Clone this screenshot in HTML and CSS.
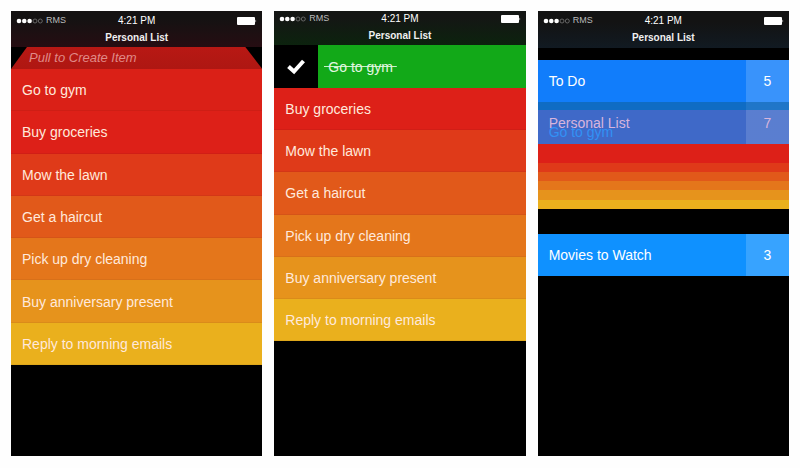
FILE: index.html
```html
<!DOCTYPE html>
<html lang="en">
<head>
<meta charset="utf-8">
<title>Personal List</title>
<link rel="stylesheet" href="styles.css">
</head>
<body>
<main class="gallery">
  <section class="phone">
    <header class="bar bar-red">
      <div class="status">
        <span class="carrier"><svg class="signal" viewBox="0 0 27 6" aria-hidden="true"><g fill="#fff"><circle cx="3" cy="3" r="2.3"/><circle cx="8.3" cy="3" r="2.3"/><circle cx="13.6" cy="3" r="2.3"/></g><g fill="none" stroke="#777" stroke-width=".8"><circle cx="19" cy="3" r="2"/><circle cx="24.3" cy="3" r="2"/></g></svg>RMS</span>
        <span class="time">4:21 PM</span>
        <svg class="battery" viewBox="0 0 20 8" aria-hidden="true"><rect width="18" height="8" rx="1" fill="#fff"/><path d="M18.5 2.5q1.5 1.5 0 3z" fill="#fff"/></svg>
      </div>
      <h1 class="title">Personal List</h1>
    </header>
    <div class="pull"><span class="pull-text">Pull to Create Item</span></div>
    <ul class="tasks tasks-seven">
      <li class="task heat-1">Go to gym</li>
      <li class="task heat-2">Buy groceries</li>
      <li class="task heat-3">Mow the lawn</li>
      <li class="task heat-4">Get a haircut</li>
      <li class="task heat-5">Pick up dry cleaning</li>
      <li class="task heat-6">Buy anniversary present</li>
      <li class="task heat-7">Reply to morning emails</li>
    </ul>
  </section>

  <section class="phone">
    <header class="bar bar-green">
      <div class="status">
        <span class="carrier"><svg class="signal" viewBox="0 0 27 6" aria-hidden="true"><g fill="#fff"><circle cx="3" cy="3" r="2.3"/><circle cx="8.3" cy="3" r="2.3"/><circle cx="13.6" cy="3" r="2.3"/></g><g fill="none" stroke="#777" stroke-width=".8"><circle cx="19" cy="3" r="2"/><circle cx="24.3" cy="3" r="2"/></g></svg>RMS</span>
        <span class="time">4:21 PM</span>
        <svg class="battery" viewBox="0 0 20 8" aria-hidden="true"><rect width="18" height="8" rx="1" fill="#fff"/><path d="M18.5 2.5q1.5 1.5 0 3z" fill="#fff"/></svg>
      </div>
      <h2 class="title">Personal List</h2>
    </header>
    <div class="done">
      <span class="done-mark"><svg class="check" viewBox="0 0 20 16" aria-hidden="true"><path d="M2.5 7.5l5.5 5L17.500 2" fill="none" stroke="#fff" stroke-width="4"/></svg></span>
      <span class="done-name"><s class="struck">Go to gym</s></span>
    </div>
    <ul class="tasks tasks-six">
      <li class="task heat-2">Buy groceries</li>
      <li class="task heat-3">Mow the lawn</li>
      <li class="task heat-4">Get a haircut</li>
      <li class="task heat-5">Pick up dry cleaning</li>
      <li class="task heat-6">Buy anniversary present</li>
      <li class="task heat-7">Reply to morning emails</li>
    </ul>
  </section>

  <section class="phone">
    <header class="bar bar-blue">
      <div class="status">
        <span class="carrier"><svg class="signal" viewBox="0 0 27 6" aria-hidden="true"><g fill="#fff"><circle cx="3" cy="3" r="2.3"/><circle cx="8.3" cy="3" r="2.3"/><circle cx="13.6" cy="3" r="2.3"/></g><g fill="none" stroke="#777" stroke-width=".8"><circle cx="19" cy="3" r="2"/><circle cx="24.3" cy="3" r="2"/></g></svg>RMS</span>
        <span class="time">4:21 PM</span>
        <svg class="battery" viewBox="0 0 20 8" aria-hidden="true"><rect width="18" height="8" rx="1" fill="#fff"/><path d="M18.5 2.5q1.5 1.5 0 3z" fill="#fff"/></svg>
      </div>
      <h2 class="title">Personal List</h2>
    </header>
    <div class="lists">
      <div class="list list-todo"><span class="list-name">To Do</span><span class="count">5</span></div>
      <div class="list list-personal"><span class="list-name">Personal List</span><span class="count">7</span><span class="ghost">Go to gym</span></div>
      <div class="stack" aria-hidden="true">
        <div class="layer layer-first heat-2"></div>
        <div class="layer heat-3"></div>
        <div class="layer heat-4"></div>
        <div class="layer heat-5"></div>
        <div class="layer heat-6"></div>
        <div class="layer heat-7"></div>
      </div>
      <div class="list list-movies"><span class="list-name">Movies to Watch</span><span class="count">3</span></div>
    </div>
  </section>
</main>
</body>
</html>
```
FILE: styles.css
```css
* { box-sizing: border-box; }

body {
  margin: 0;
  background: #fefefe;
  color: #fff;
  font: 14px/20px "Liberation Sans", Arial, sans-serif;
}

.gallery {
  display: grid;
  grid-template-columns: repeat(3, 1fr);
  gap: 12px;
  min-height: 100vh;
  padding: 11px 11px 12px;
}

.phone { background: #000; }

/* Status bar and title */
.bar {
  height: 36px;
  padding-top: 2px;
  text-align: center;
}
.bar-red { background: linear-gradient(#141212 20%, #260d12); }
.bar-green { height: 34px; padding-top: 0; background: linear-gradient(#141614 20%, #0c230e); }
.bar-blue { height: 37px; background: linear-gradient(#131313 30%, #111a22); }

.status {
  display: grid;
  grid-template-columns: 1fr auto 1fr;
  align-items: center;
  height: 15px;
  padding: 0 5px;
  font-size: 10px;
  line-height: 15px;
}
.carrier {
  display: flex;
  align-items: center;
  gap: 3px;
  color: #bbb;
  font-size: 9px;
}
.signal { width: 27px; height: 6px; }
.battery { width: 20px; height: 8px; justify-self: end; }

.title {
  margin: 0;
  color: #f0f0f0;
  font-size: 10px;
  font-weight: 700;
  line-height: 19px;
}

/* Folded row revealed by pulling down */
.pull {
  height: 22px;
  padding-left: 18px;
  background: linear-gradient(#b81814, #ae1712);
  clip-path: polygon(16px 0, calc(100% - 17px) 0, 100% 100%, 0 100%);
}
.pull-text {
  color: #e08a88;
  font-size: 13px;
  font-style: italic;
}

/* Tasks */
.tasks {
  display: flex;
  flex-direction: column;
  margin: 0;
  padding: 0;
  list-style: none;
}
.tasks-seven { height: 296px; }
.tasks-six { height: 253px; }
.task {
  display: flex;
  flex: 1;
  align-items: center;
  padding-left: 11px;
  color: #ffe9dc;
  box-shadow: inset 0 -1px rgba(0, 0, 0, 0.05);
}
.heat-1 { background: #da2017; }
.heat-2 { background: #dd2018; }
.heat-3 { background: #df3a19; }
.heat-4 { background: #e1591a; }
.heat-5 { background: #e4761b; }
.heat-6 { background: #e6931c; }
.heat-7 { background: #eab01d; }

/* Completed task sliding right */
.done {
  display: flex;
  height: 43px;
}
.done-mark {
  display: flex;
  align-items: center;
  justify-content: center;
  width: 44px;
}
.check { width: 20px; height: 16px; }
.done-name {
  display: flex;
  flex: 1;
  align-items: center;
  padding-left: 6px;
  background: #12a918;
}
.struck {
  padding: 0 4px;
  background: linear-gradient(#c9f0c9, #c9f0c9) center / 100% 1px no-repeat;
  color: #e2f7e2;
  text-decoration: none;
}

/* Lists */
.lists { padding-top: 12px; }
.list {
  position: relative;
  display: flex;
  height: 42px;
  line-height: 42px;
}
.list-name { flex: 1; padding-left: 11px; }
.count {
  width: 43px;
  background: rgba(255, 255, 255, 0.17);
  text-align: center;
}
.list-todo { background: #117dfb; }
.list-personal {
  background: linear-gradient(#0f6cc4 8px, #3f69c8 8px);
  color: #d8b5dc;
}
.list-personal .count {
  background: linear-gradient(rgba(255, 255, 255, 0.07) 8px, rgba(255, 255, 255, 0.14) 8px);
}
.list-movies { margin-top: 25px; background: #0f91ff; }

/* Task name fading out behind the list title */
.ghost {
  position: absolute;
  top: 9px;
  left: 11px;
  color: #3291f5;
}

.stack { display: flex; flex-direction: column; height: 65px; }
.layer { flex: 1; }
.layer-first { flex: 2; }
```
